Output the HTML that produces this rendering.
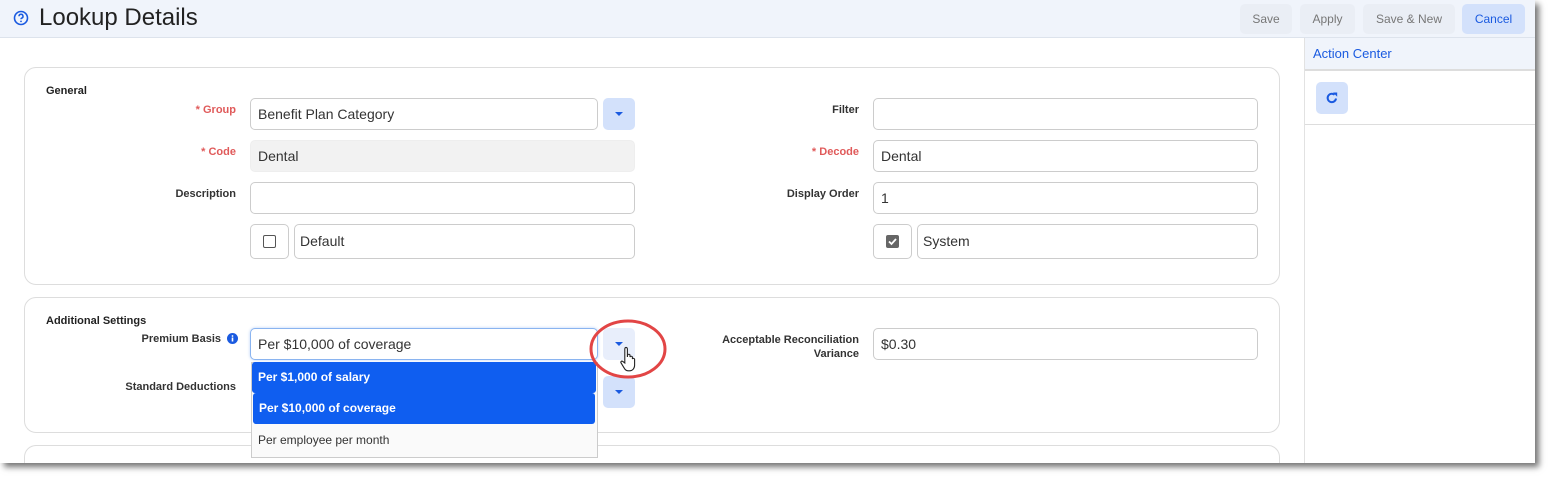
<!DOCTYPE html>
<html><head><style>
*{box-sizing:border-box;margin:0;padding:0}
body{width:1549px;height:477px;background:#fff;position:relative;overflow:hidden;font-family:"Liberation Sans",Arial,sans-serif}
.a{position:absolute}
.frame{left:0;top:0;width:1535px;height:463px;background:#fff;box-shadow:4px 4px 6px rgba(0,0,0,.55);overflow:hidden}
.btn{position:absolute;top:4px;height:30px;border-radius:5px;background:#eaeef5;color:#777;font-size:12px;line-height:30px;text-align:center}
.card{position:absolute;border:1px solid #ddd;border-radius:12px;background:#fff}
.lbl{position:absolute;font-size:11px;font-weight:bold;color:#333;text-align:right}
.red{color:#e05a5a}
.inp{position:absolute;height:32px;border:1px solid #ccc;border-radius:5px;background:#fff;font-size:14px;color:#333;line-height:30px;padding-left:7px}
.dd{position:absolute;width:32px;height:32px;border-radius:5px;background:#d3e1fb}
.dd:after{content:"";position:absolute;left:12px;top:14px;border-left:4px solid transparent;border-right:4px solid transparent;border-top:4px solid #1a5ae0}
.sec{position:absolute;font-size:11px;font-weight:bold;color:#222}
</style></head><body>
<div class="a frame">
 <div class="a" style="left:0;top:0;width:1535px;height:38px;background:#f0f4fb;border-bottom:1px solid #dde3ec"></div>
 <svg class="a" style="left:13px;top:10px" width="16" height="16" viewBox="0 0 16 16"><circle cx="8" cy="8" r="6.5" fill="none" stroke="#1a5ae0" stroke-width="1.6"/><path d="M6 6.3a2 2 0 1 1 2.6 1.9c-.5.2-.6.5-.6 1.1" fill="none" stroke="#1a5ae0" stroke-width="1.5"/><circle cx="8" cy="11.4" r=".9" fill="#1a5ae0"/></svg>
 <div class="a" style="left:39px;top:4px;font-size:24px;color:#222">Lookup Details</div>
 <div class="btn" style="left:1240px;width:52px">Save</div>
 <div class="btn" style="left:1300px;width:55px">Apply</div>
 <div class="btn" style="left:1363px;width:92px">Save &amp; New</div>
 <div class="btn" style="left:1462px;width:63px;background:#d3e1fb;color:#1a5ae0">Cancel</div>

 <div class="a" style="left:1304px;top:38px;width:1px;height:425px;background:#e2e2e2"></div>
 <div class="a" style="left:1305px;top:38px;width:230px;height:33px;background:#f0f4fb;border-bottom:2px solid #ddd;color:#1a5ae0;font-size:13px;line-height:31px;padding-left:8px">Action Center</div>
 <div class="a" style="left:1316px;top:82px;width:32px;height:32px;border-radius:5px;background:#d3e1fb"></div>
 <svg class="a" style="left:1324px;top:90px" width="16" height="16" viewBox="0 0 16 16"><path d="M12 8.5A4.2 4.2 0 1 1 10.6 4.8" fill="none" stroke="#1a5ae0" stroke-width="2"/><path d="M9 2.5h4.2v4.2z" fill="#1a5ae0"/></svg>
 <div class="a" style="left:1305px;top:124px;width:230px;height:1px;background:#ddd"></div>

 <div class="card" style="left:24px;top:67px;width:1256px;height:218px"></div>
 <div class="sec" style="left:46px;top:85px">General</div>
 <div class="lbl red" style="left:100px;width:136px;top:104px">* Group</div>
 <div class="inp" style="left:250px;top:98px;width:348px">Benefit Plan Category</div>
 <div class="dd" style="left:603px;top:98px"></div>
 <div class="lbl red" style="left:100px;width:136px;top:146px">* Code</div>
 <div class="inp" style="left:250px;top:140px;width:385px;background:#f2f2f2;border-color:#eee">Dental</div>
 <div class="lbl" style="left:100px;width:136px;top:188px">Description</div>
 <div class="inp" style="left:250px;top:182px;width:385px"></div>
 <div class="inp" style="left:250px;top:224px;width:39px;height:35px"></div>
 <div class="a" style="left:263px;top:235px;width:13px;height:13px;border:1px solid #555;border-radius:2px"></div>
 <div class="inp" style="left:294px;top:224px;width:341px;height:35px;line-height:33px;padding-left:5px">Default</div>

 <div class="lbl" style="left:700px;width:159px;top:104px">Filter</div>
 <div class="inp" style="left:873px;top:98px;width:385px"></div>
 <div class="lbl red" style="left:700px;width:159px;top:146px">* Decode</div>
 <div class="inp" style="left:873px;top:140px;width:385px">Dental</div>
 <div class="lbl" style="left:700px;width:159px;top:188px">Display Order</div>
 <div class="inp" style="left:873px;top:182px;width:385px">1</div>
 <div class="inp" style="left:873px;top:224px;width:39px;height:35px"></div>
 <svg class="a" style="left:886px;top:235px" width="13" height="13" viewBox="0 0 13 13"><rect width="13" height="13" rx="2" fill="#666"/><path d="M3 6.5l2.5 2.5 4.5-5" stroke="#fff" stroke-width="1.8" fill="none"/></svg>
 <div class="inp" style="left:917px;top:224px;width:341px;height:35px;line-height:33px;padding-left:5px">System</div>

 <div class="card" style="left:24px;top:297px;width:1256px;height:136px"></div>
 <div class="sec" style="left:46px;top:315px">Additional Settings</div>
 <div class="lbl" style="left:80px;width:141px;top:333px">Premium Basis</div>
 <svg class="a" style="left:227px;top:333px" width="11" height="11" viewBox="0 0 11 11"><circle cx="5.5" cy="5.5" r="5.5" fill="#1a5ae0"/><rect x="4.7" y="4.5" width="1.6" height="4" fill="#fff"/><circle cx="5.5" cy="3" r=".9" fill="#fff"/></svg>
 <div class="inp" style="left:250px;top:328px;width:348px;border-color:#8ab4f0;box-shadow:0 0 3px #bcd3f5">Per $10,000 of coverage</div>
 <div class="dd" style="left:603px;top:328px;background:#e8eefb"></div>
 <div class="lbl" style="left:80px;width:156px;top:381px">Standard Deductions</div>
 <div class="dd" style="left:603px;top:376px"></div>
 <div class="lbl" style="left:680px;width:179px;top:333px;line-height:14px">Acceptable Reconciliation<br>Variance</div>
 <div class="inp" style="left:873px;top:328px;width:385px">$0.30</div>

 <div class="card" style="left:24px;top:445px;width:1256px;height:18px;border-bottom:none;border-radius:12px 12px 0 0"></div>

 <div class="a" style="left:251px;top:362px;width:347px;height:96px;border:1px solid #ccc;background:#fafafa"></div>
 <div class="a" style="left:252px;top:362px;width:344px;height:31px;background:#0f5ef0;border-radius:3px;color:#fff;font-size:12px;font-weight:bold;line-height:31px;padding-left:6px">Per $1,000 of salary</div>
 <div class="a" style="left:253px;top:393px;width:342px;height:31px;background:#0f5ef0;border-radius:3px;color:#fff;font-size:12px;font-weight:bold;line-height:31px;padding-left:6px">Per $10,000 of coverage</div>
 <div class="a" style="left:258px;top:433px;color:#333;font-size:12px">Per employee per month</div>

 <svg class="a" style="left:585px;top:315px" width="90" height="70" viewBox="0 0 90 70"><ellipse cx="43" cy="34" rx="37" ry="28" fill="none" stroke="#e24545" stroke-width="3"/></svg>
 <svg class="a" style="left:620px;top:346px" width="20" height="26" viewBox="0 0 20 26"><path d="M5 2c1-1 2.4-.5 2.4 1v8l.2-2c.6-1 2-1 2.4 0v2c.5-1 2-1 2.4 0v2c.5-1 2-.8 2.2.3v6c0 3-2 5.5-5 5.5H8c-2 0-3-1-4-3l-3-5c-.6-1 .6-2.3 1.8-1.3L4.8 17V3z" fill="#fff" stroke="#222" stroke-width="1.1"/></svg>
</div>
</body></html>
